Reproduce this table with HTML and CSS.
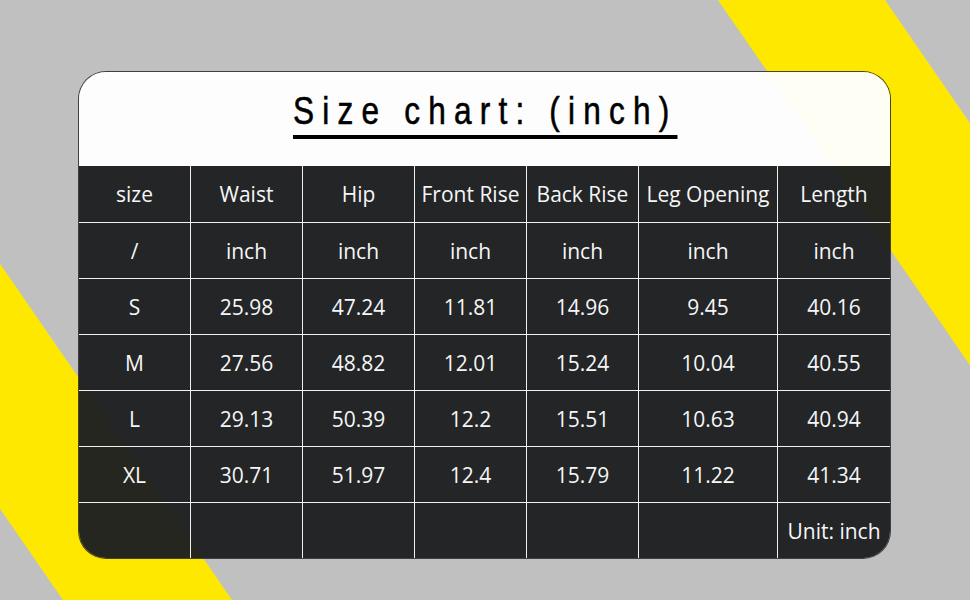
FILE: index.html
```html
<!DOCTYPE html>
<html>
<head>
<meta charset="utf-8">
<link rel="stylesheet" href="styles.css">
</head>
<body>
<div class="page">
  <svg class="bg" width="970" height="600" viewBox="0 0 970 600">
    <rect width="970" height="600" fill="#c0c0c0"/>
    <polygon points="718,0 885,0 1299,600 1132,600" fill="#ffe800"/>
    <polygon points="-351,0 -182,0 232,600 63,600" fill="#ffe800"/>
  </svg>
  <div class="card">
    <div class="head"><h1 class="title">Size chart: (inch)</h1></div>
    <div class="grid">
      <div class="c">size</div><div class="c">Waist</div><div class="c">Hip</div><div class="c">Front Rise</div><div class="c">Back Rise</div><div class="c">Leg Opening</div><div class="c">Length</div>
      <div class="c r">/</div><div class="c r">inch</div><div class="c r">inch</div><div class="c r">inch</div><div class="c r">inch</div><div class="c r">inch</div><div class="c r">inch</div>
      <div class="c r">S</div><div class="c r">25.98</div><div class="c r">47.24</div><div class="c r">11.81</div><div class="c r">14.96</div><div class="c r">9.45</div><div class="c r">40.16</div>
      <div class="c r">M</div><div class="c r">27.56</div><div class="c r">48.82</div><div class="c r">12.01</div><div class="c r">15.24</div><div class="c r">10.04</div><div class="c r">40.55</div>
      <div class="c r">L</div><div class="c r">29.13</div><div class="c r">50.39</div><div class="c r">12.2</div><div class="c r">15.51</div><div class="c r">10.63</div><div class="c r">40.94</div>
      <div class="c r">XL</div><div class="c r">30.71</div><div class="c r">51.97</div><div class="c r">12.4</div><div class="c r">15.79</div><div class="c r">11.22</div><div class="c r">41.34</div>
      <div class="c r"></div><div class="c r"></div><div class="c r"></div><div class="c r"></div><div class="c r"></div><div class="c r"></div><div class="c r">Unit: inch</div>
    </div>
  </div>
</div>
</body>
</html>
```
FILE: styles.css
```css
html, body {
  margin: 0;
  padding: 0;
}
.page {
  position: relative;
  width: 970px;
  height: 600px;
  overflow: hidden;
  padding: 72px 0 0 79px;
  box-sizing: border-box;
}
.bg {
  position: absolute;
  left: 0;
  top: 0;
  z-index: 0;
}
.card {
  position: relative;
  z-index: 1;
  width: 811px;
  height: 486px;
  border-radius: 27px;
  overflow: hidden;
  box-shadow: 0 0 0 1px rgba(40, 40, 40, 0.85);
}
.head {
  height: 94px;
  background: rgba(255, 255, 255, 0.96);
  display: flex;
  justify-content: center;
  align-items: flex-start;
}
.title {
  display: inline-block;
  margin: 14px 0 0 0;
  font-family: "Liberation Sans Narrow", "Liberation Sans", Arial, sans-serif;
  font-weight: normal;
  font-size: 38.5px;
  letter-spacing: 10px;
  padding-left: 2px;
  color: #000;
  -webkit-text-stroke: 0.6px #000;
  text-decoration: underline;
  text-decoration-thickness: 3.5px;
  text-underline-offset: 11px;
  line-height: 50px;
  transform: scaleX(0.82);
  transform-origin: center;
}
.grid {
  display: grid;
  grid-template-columns: 112px 112px 112px 112px 112px 139px 112px;
  grid-auto-rows: 56px;
  background: rgba(28, 30, 32, 0.96);
  font-family: "Open Sans", "Noto Sans", sans-serif;
  font-size: 21px;
  font-weight: 400;
  color: #f6f6f6;
}
.c {
  display: flex;
  align-items: center;
  justify-content: center;
  border-right: 1px solid #f0f0f0;
  white-space: nowrap;
}
.c:nth-child(7n) {
  border-right: none;
}
.r {
  border-top: 1px solid #f0f0f0;
}
```
